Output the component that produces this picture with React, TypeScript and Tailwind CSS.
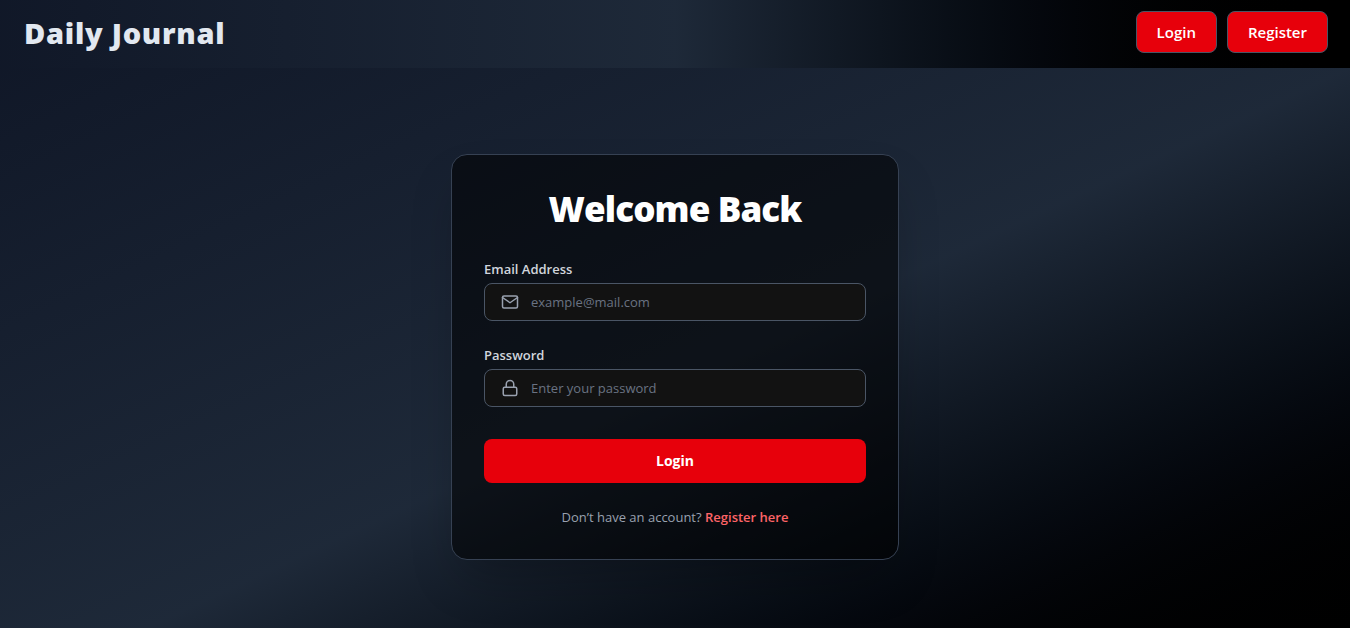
import type { ReactNode } from "react";
import { FiLock, FiMail } from "react-icons/fi";

type FieldProps = {
  id: string;
  label: string;
  type: string;
  placeholder: string;
  icon: ReactNode;
};

function Field({ id, label, type, placeholder, icon }: FieldProps) {
  return (
    <div>
      <label htmlFor={id} className="mb-1 block text-[13px] leading-5 font-semibold text-gray-300">
        {label}
      </label>
      <div className="flex h-[38px] items-center gap-3 rounded-lg border border-gray-600 bg-[#121212] px-4 text-gray-400">
        {icon}
        <input
          id={id}
          type={type}
          placeholder={placeholder}
          className="min-w-0 flex-1 bg-transparent text-[13px] leading-5 text-gray-200 outline-none placeholder:text-gray-500"
        />
      </div>
    </div>
  );
}

function NavButton({ children }: { children: ReactNode }) {
  return (
    <button type="button" className="h-[42px] rounded-lg border border-gray-600 bg-red-600 px-5 text-[15px] font-semibold text-white">
      {children}
    </button>
  );
}

export default function App() {
  return (
    <div className="min-h-screen bg-black font-['Open_Sans','Noto_Sans',sans-serif]">
      <header className="flex h-[68px] items-center justify-between bg-linear-to-r from-gray-900 via-gray-800 to-black pr-[22px] pb-0.5 pl-6">
        <div className="text-[29px] font-extrabold tracking-wide text-slate-200">Daily Journal</div>
        <nav className="flex gap-2.5 pb-0.5">
          <NavButton>Login</NavButton>
          <NavButton>Register</NavButton>
        </nav>
      </header>

      <main className="flex min-h-[calc(100vh-68px)] items-center justify-center bg-linear-to-br from-gray-900 via-gray-800 to-black bg-[length:100%_100vh] bg-no-repeat px-4 pt-[18px]">
        <section className="w-full max-w-md rounded-2xl border border-gray-700 bg-black/55 p-8 shadow-2xl">
          <h1 className="mb-7 text-center text-[35px] leading-11 font-extrabold tracking-tight text-white">Welcome Back</h1>
          <form onSubmit={(e) => e.preventDefault()}>
            <div className="flex flex-col gap-6">
              <Field id="email" label="Email Address" type="email" placeholder="example@mail.com" icon={<FiMail size={18} aria-hidden="true" />} />
              <Field id="password" label="Password" type="password" placeholder="Enter your password" icon={<FiLock size={18} aria-hidden="true" />} />
            </div>
            <button type="submit" className="mt-8 h-11 w-full rounded-lg bg-red-600 text-sm font-bold text-white">
              Login
            </button>
          </form>
          <p className="mt-6 text-center text-[13px] leading-5 text-gray-400">
            Don’t have an account?{" "}
            <a href="#register" className="font-semibold text-red-400">
              Register here
            </a>
          </p>
        </section>
      </main>
    </div>
  );
}
